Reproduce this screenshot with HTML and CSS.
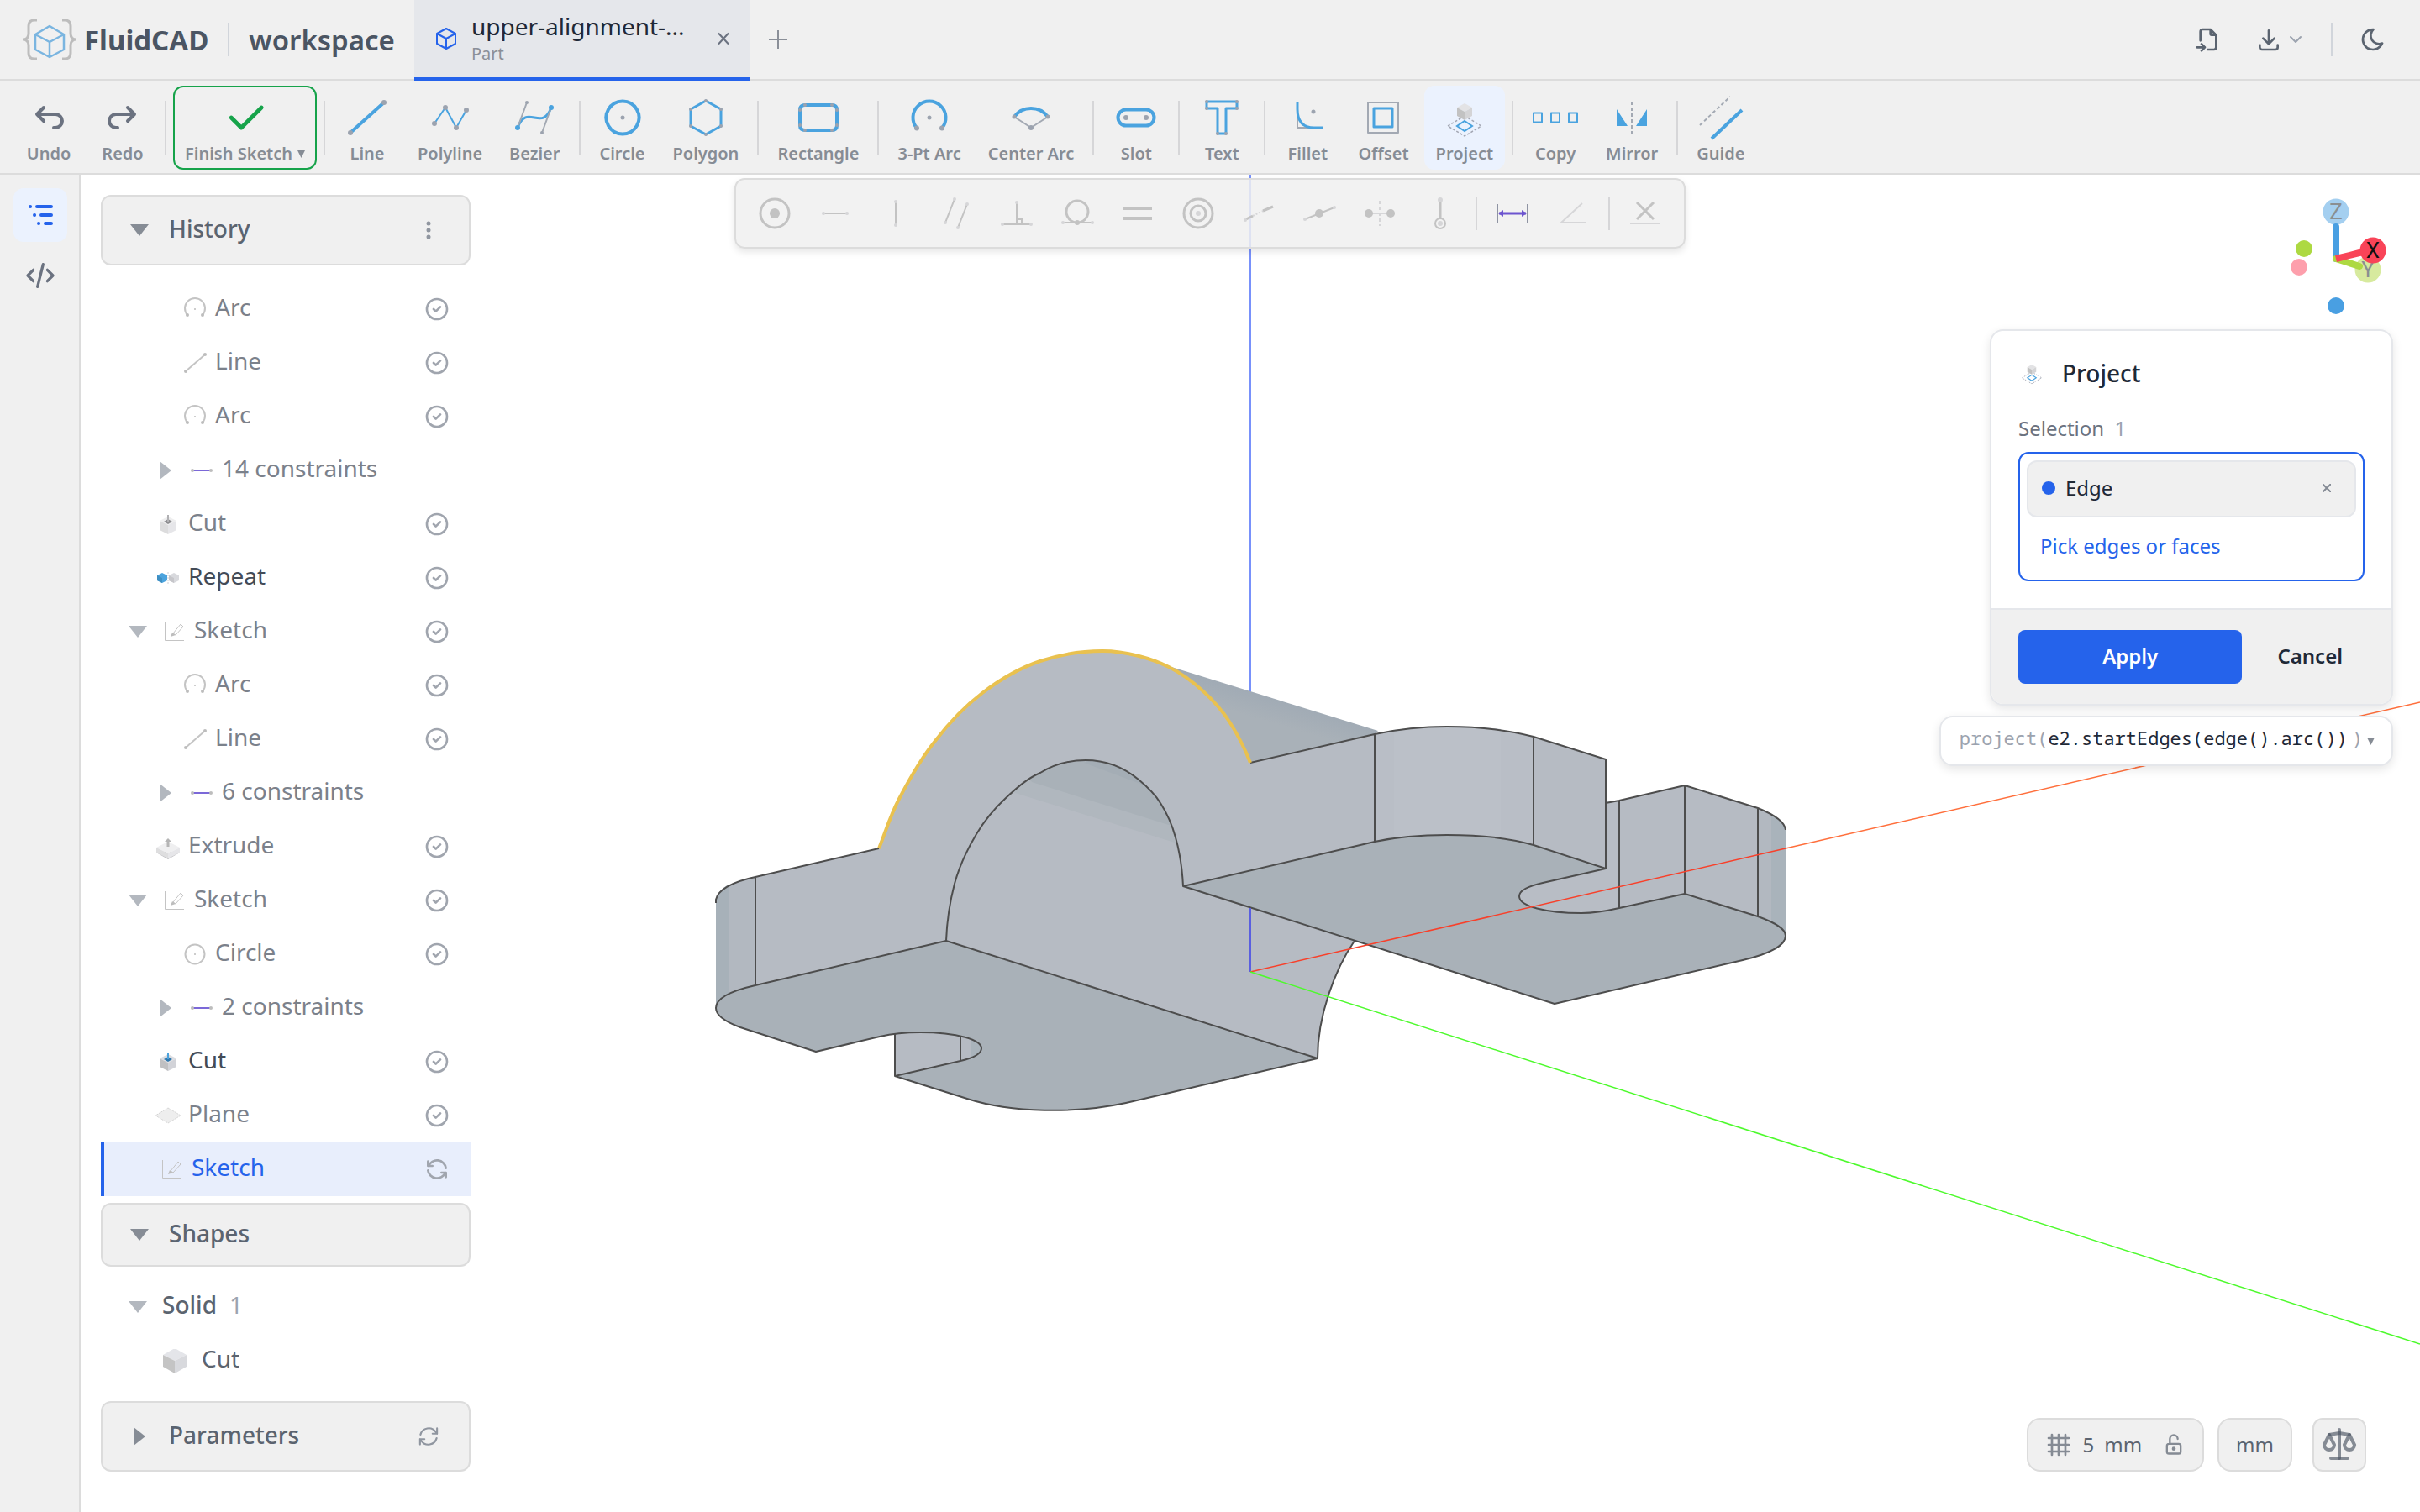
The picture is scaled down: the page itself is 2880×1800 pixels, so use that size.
FILE: index.html
```html
<!DOCTYPE html>
<html lang="en">

<head>
    <meta charset="UTF-8">
    <meta name="viewport" content="width=device-width, initial-scale=1.0">
    <title>FluidCAD</title>
    <link rel="stylesheet" href="styles.css">
</head>

<body>
    <!-- shared icons -->
    <svg class="defs" width="0" height="0" aria-hidden="true">
        <symbol id="i-check" viewBox="0 0 24 24">
            <path d="M3 12a9 9 0 1 0 18 0a9 9 0 1 0 -18 0M9 12l2 2l4 -4" />
        </symbol>
        <symbol id="i-arc" viewBox="0 0 28 28">
            <path d="M5 21A12 12 0 1 1 23 21" />
            <circle class="dot" cx="14" cy="14" r="1" />
            <circle class="dot" cx="5" cy="21" r="2" />
            <circle class="dot" cx="23" cy="21" r="2" />
        </symbol>
        <symbol id="i-circle" viewBox="0 0 28 28">
            <circle cx="14" cy="14" r="11.5" />
            <circle class="dot" cx="14" cy="14" r="1" />
        </symbol>
        <symbol id="i-line" viewBox="0 0 28 28">
            <path d="M3 24L26 4" />
            <circle class="dot" cx="3" cy="24" r="2" />
            <circle class="dot" cx="26" cy="4" r="2" />
        </symbol>
        <symbol id="i-constraint" viewBox="0 0 28 28">
            <path d="M3 14H25" />
            <circle class="dot" cx="3" cy="14" r="2" />
            <circle class="dot" cx="25" cy="14" r="2" />
        </symbol>
        <symbol id="i-sketch" viewBox="0 0 28 28">
            <path d="M3.500 3V24.500H26" stroke-width="1" />
            <path d="M13 16L22 5L25 8L16 18Z" stroke-width="1" />
            <path class="dot" d="M12 15L16 18L10 20Z" />
        </symbol>
        <symbol id="i-cube" viewBox="0 0 28 28">
            <path d="M14 -1L28 7L14 14L0 7Z" fill="#e4e5e9" stroke="none" />
            <path d="M0 7L14 14V29L0 21Z" fill="#c4c4c4" stroke="none" />
            <path d="M28 7L14 14V29L28 21Z" fill="#d8d9dd" stroke="none" />
        </symbol>
        <symbol id="i-project" viewBox="0 0 48 48">
            <path d="M24 22L44 34L24 46L4 34Z" fill="none" stroke="#a3a7b3" stroke-width="1.5" stroke-dasharray="3 2" />
            <path d="M24 28L33 34L24 40L15 34Z" fill="none" stroke="#4aa3df" stroke-width="2" />
            <path d="M24 7L33 12L24 17L15 12Z" fill="#e3e3e5" />
            <path d="M15 12L24 17V27L15 22Z" fill="#c2c2c2" />
            <path d="M33 12L24 17V27L33 22Z" fill="#d4d4d6" />
        </symbol>
    </svg>

    <header class="header">
        <div class="brand">
            <svg class="logo" viewBox="0 0 68 48" width="68" height="48">
                <path d="M20 1H17C12 1 10 4 10 8V17C10 21 8 24 3 24C8 24 10 27 10 31V40C10 44 12 47 17 47H20M50 1H53C58 1 60 4 60 8V17C60 21 62 24 67 24C62 24 60 27 60 31V40C60 44 58 47 53 47H50" fill="none" stroke="#bdbdbd" stroke-width="3" />
                <path d="M35 8L52 18V36L35 45L18 36V18ZM18 18L35 27L52 18M35 27V45" fill="none" stroke="#7ab5e0" stroke-width="2.5" stroke-linejoin="round" />
            </svg>
            <span>FluidCAD</span>
        </div>
        <span class="bar"></span>
        <span class="workspace-name">workspace</span>
        <div class="tab">
            <svg viewBox="0 0 24 26" width="24" height="26" fill="none" stroke="#2563eb" stroke-width="2" stroke-linejoin="round">
                <path d="M12 1L23 7V19L12 25L1 19V7ZM1 7L12 13L23 7M12 13V25" />
            </svg>
            <div class="tab-text">
                <span class="tab-title">upper-alignment-...</span>
                <span class="tab-kind">Part</span>
            </div>
            <button class="plain" aria-label="Close tab">
                <svg viewBox="0 0 16 16" width="16" height="16" fill="none" stroke="#6b7280" stroke-width="2"><path d="M2 1.500L14 14.500M14 1.500L2 14.500" /></svg>
            </button>
        </div>
        <button class="plain new-tab" aria-label="New tab">
            <svg viewBox="0 0 22 22" width="22" height="22" fill="none" stroke="#8a8f98" stroke-width="2"><path d="M11 0V22M0 11H22" /></svg>
        </button>
        <div class="header-actions">
            <button class="plain" aria-label="Import">
                <svg class="icon" viewBox="0 0 24 24" width="32" height="32"><path d="M14 3v4a1 1 0 0 0 1 1h4M5 13v-8a2 2 0 0 1 2 -2h7l5 5v11a2 2 0 0 1 -2 2h-5.500m-9.500 -2h7m-3 -3l3 3l-3 3" /></svg>
            </button>
            <button class="plain download" aria-label="Export">
                <svg class="icon" viewBox="0 0 24 24" width="32" height="32"><path d="M4 17v2a2 2 0 0 0 2 2h12a2 2 0 0 0 2 -2v-2M7 11l5 5l5 -5M12 4v12" /></svg>
                <svg class="icon faint" viewBox="0 0 24 24" width="24" height="24"><path d="M6 9l6 6l6 -6" /></svg>
            </button>
            <span class="bar"></span>
            <button class="plain" aria-label="Dark theme">
                <svg class="icon" viewBox="0 0 24 24" width="32" height="32"><path d="M12 3c.132 0 .263 0 .393 0a7.500 7.500 0 0 0 7.920 12.446a9 9 0 1 1 -8.313 -12.454z" /></svg>
            </button>
        </div>
    </header>

    <nav class="toolbar">
        <button class="tool">
            <svg class="hist" viewBox="0 0 24 24"><path d="M9 14l-4 -4l4 -4M5 10h11a4 4 0 1 1 0 8h-1" /></svg>Undo
        </button>
        <button class="tool">
            <svg class="hist" viewBox="0 0 24 24"><path d="M15 14l4 -4l-4 -4M19 10h-11a4 4 0 1 0 0 8h1" /></svg>Redo
        </button>
        <span class="sep"></span>
        <button class="tool finish">
            <svg viewBox="2 2 20 20"><path d="M5 12l5 5l10 -10" fill="none" stroke="#16a34a" stroke-width="2" stroke-linecap="round" /></svg>
            <span class="finish-label">Finish Sketch <svg class="caret" viewBox="0 0 9 9"><path d="M0 0H9L4.500 9Z" /></svg></span>
        </button>
        <span class="sep"></span>
        <button class="tool">
            <svg viewBox="0 0 48 48"><path d="M4 42L44 6" /><circle cx="4" cy="42" r="3" /><circle cx="44" cy="6" r="3" /></svg>Line
        </button>
        <button class="tool">
            <svg class="thin" viewBox="0 0 48 48"><path d="M5 31L18 12L31 36L43 15" /><circle cx="5" cy="31" r="3" /><circle cx="18" cy="12" r="3" /><circle cx="31" cy="36" r="3" /><circle cx="43" cy="15" r="3" /></svg>Polyline
        </button>
        <button class="tool">
            <svg class="medium" viewBox="0 0 48 48"><path d="M4 36C15 6 33 42 44 12" /><path class="aux" d="M4 36L15 6M44 12L33 42" /><circle cx="15" cy="6" r="2" /><circle cx="33" cy="42" r="2" /><circle class="blue" cx="4" cy="36" r="3" /><circle class="blue" cx="44" cy="12" r="3" /></svg>Bezier
        </button>
        <span class="sep"></span>
        <button class="tool">
            <svg viewBox="0 0 48 48"><path d="M24 4.500A19.500 19.500 0 1 1 23.900 4.500Z" /><circle cx="24" cy="24" r="2.500" /></svg>Circle
        </button>
        <button class="tool">
            <svg class="medium" viewBox="0 0 48 48"><path d="M24 4L42 14V34L24 44L6 34V14Z" /><circle cx="24" cy="4" r="2" /><circle cx="42" cy="14" r="2" /><circle cx="42" cy="34" r="2" /><circle cx="24" cy="44" r="2" /><circle cx="6" cy="34" r="2" /><circle cx="6" cy="14" r="2" /></svg>Polygon
        </button>
        <span class="sep"></span>
        <button class="tool">
            <svg viewBox="0 0 48 48"><path d="M8 9H40Q46 9 46 15V33Q46 39 40 39H8Q2 39 2 33V15Q2 9 8 9Z" /><circle cx="8" cy="9" r="2" /><circle cx="40" cy="9" r="2" /><circle cx="46" cy="15" r="2" /><circle cx="46" cy="33" r="2" /><circle cx="40" cy="39" r="2" /><circle cx="8" cy="39" r="2" /><circle cx="2" cy="33" r="2" /><circle cx="2" cy="15" r="2" /></svg>Rectangle
        </button>
        <span class="sep"></span>
        <button class="tool">
            <svg viewBox="0 0 48 48"><path d="M9 36.500A19.500 19.500 0 1 1 39 36.500" /><circle cx="24" cy="24" r="2.500" /><circle cx="9" cy="36.500" r="3" /><circle cx="39" cy="36.500" r="3" /></svg>3-Pt Arc
        </button>
        <button class="tool">
            <svg viewBox="0 0 48 48"><path class="aux" d="M4 23L24 36L44 23" /><path d="M4 23A25 25 0 0 1 44 23" /><circle cx="4" cy="23" r="2.500" /><circle cx="44" cy="23" r="2.500" /><circle cx="24" cy="36" r="3" /></svg>Center Arc
        </button>
        <span class="sep"></span>
        <button class="tool">
            <svg viewBox="0 0 48 48"><path d="M12 14.500H36A9.500 9.500 0 0 1 36 33.500H12A9.500 9.500 0 0 1 12 14.500Z" /><circle cx="12" cy="24" r="3" /><circle cx="36" cy="24" r="3" /></svg>Slot
        </button>
        <span class="sep"></span>
        <button class="tool">
            <svg class="medium" viewBox="0 0 48 48"><path d="M6 5H42V13H29V43H19V13H6Z" /><circle cx="6" cy="5" r="2" /><circle cx="42" cy="5" r="2" /><circle cx="6" cy="13" r="2" /><circle cx="42" cy="13" r="2" /><circle cx="19" cy="43" r="2" /><circle cx="29" cy="43" r="2" /></svg>Text
        </button>
        <span class="sep"></span>
        <button class="tool">
            <svg class="medium" viewBox="0 0 48 48"><path class="aux" d="M12 18V36H30" /><path d="M12 6V14C12 30 20 36 32 36H42" /><circle cx="31" cy="17" r="2.500" /></svg>Fillet
        </button>
        <button class="tool">
            <svg class="medium" viewBox="0 0 48 48"><path class="aux" d="M6 6H42V42H6Z" /><path d="M13 13H35V35H13Z" /></svg>Offset
        </button>
        <button class="tool active">
            <svg><use href="#i-project" /></svg>Project
        </button>
        <span class="sep"></span>
        <button class="tool">
            <svg class="thin" viewBox="0 0 48 48"><path d="M-2 18.500H8V29.500H-2ZM19 18.500H29V29.500H19ZM40 18.500H50V29.500H40Z" /></svg>Copy
        </button>
        <button class="tool">
            <svg viewBox="0 0 48 48"><path class="aux" d="M24 5V44" stroke-dasharray="4 3" /><path class="solid" d="M6 14L19 34H6ZM42 14L29 34H42Z" /></svg>Mirror
        </button>
        <span class="sep"></span>
        <button class="tool">
            <svg viewBox="0 0 48 48"><path class="aux" d="M-1 33L35 -1" stroke-dasharray="4 3" /><path d="M13 49L49 15" /></svg>Guide
        </button>
    </nav>

    <main class="main">
        <aside class="rail">
            <button class="rail-btn active" aria-label="Model tree">
                <svg viewBox="0 0 32 32" width="32" height="32"><path d="M12 6H29M17 16H29M22 26H29M4 6H4.100M9 16H9.100M14 26H14.100" /></svg>
            </button>
            <button class="rail-btn" aria-label="Code">
                <svg viewBox="0 0 24 24" width="40" height="40"><path d="M7 8l-4 4l4 4M17 8l4 4l-4 4M14 4l-4 16" /></svg>
            </button>
        </aside>

        <section class="stage">
            <svg class="scene" viewBox="96 208 2784 1592" preserveAspectRatio="xMidYMid slice">
                <defs>
                    <linearGradient id="barrel" gradientUnits="userSpaceOnUse" x1="1560" y1="845" x2="1552" y2="872">
                        <stop offset="0" stop-color="#a1abb5" />
                        <stop offset="1" stop-color="#a9b1b8" />
                    </linearGradient>
                    <clipPath id="archClip">
                        <path d="M1126 1120C1127 1095 1130 1075 1136 1052C1142 1030 1150 1013 1162 993C1172 976 1183 963 1197 950C1210 938 1222 927 1238 920C1256 909 1274 905 1292 905C1318 905 1338 914 1355 928C1367 938 1375 946 1381 956C1390 970 1395 982 1399 997C1405 1018 1407 1035 1408 1055Z" />
                    </clipPath>
                </defs>

                <path d="M1488 208V830" stroke="#7891fb" stroke-width="2" />

                <!-- far block behind the right slot -->
                <path d="M1808 1067L1911 955L1927 953L2005 935L2092 962C2112 970 2124 978 2125 988V1114L2092 1130L1880 1100Z" fill="#b6bbc3" />
                <path d="M1808 1050L1911 1030V955L1927 953V1095H1808Z" fill="#b8bdc5" />
                <path d="M2092 962C2112 970 2124 978 2125 988V1114L2092 1094Z" fill="#b2b8c0" />
                <path d="M2108 969C2119 975 2124 980 2125 988V1116L2108 1110Z" fill="#a9b3bb" />

                <!-- bore wall -->
                <path d="M1126 1120L1150 900L1400 900L1408 1055L1612 1120C1590 1155 1568 1210 1568 1260Z" fill="#b6bbc3" />

                <!-- front face -->
                <path d="M1046 1010C1054 990 1059 972 1070 951C1081 930 1096 903 1113 882C1129 861 1148 841 1169 825C1190 809 1214 795 1238 787C1262 779 1288 775 1312 775C1340 775 1371 784 1391 794C1405 801 1420 812 1432 823C1444 834 1454 845 1463 859C1472 873 1481 890 1488 908L1636 874V1002L1408 1055C1407 1035 1405 1018 1399 997C1395 982 1390 970 1381 956C1375 946 1367 938 1355 928C1338 914 1318 905 1292 905C1274 905 1256 909 1238 920C1222 927 1210 938 1197 950C1183 963 1172 976 1162 993C1150 1013 1142 1030 1136 1052C1130 1075 1127 1095 1126 1120L899 1173L852 1200V1071C854 1060 870 1050 899 1044Z" fill="#b6bbc3" />
                <path d="M899 1044C870 1050 854 1060 852 1071V1200L899 1173Z" fill="#b2b8c0" />
                <path d="M867 1053C858 1058 853 1064 852 1071V1200L867 1184Z" fill="#a7b1b9" />
                <g clip-path="url(#archClip)">
                    <path d="M1205 943L1401 1004L1420 880H1190Z" fill="#b0b7be" />
                    <path d="M1228 931L1394 983L1420 880H1190Z" fill="#a9b1b8" />
                    <path d="M1290 908L1365 936L1340 890Z" fill="#a4adb5" />
                </g>

                <!-- barrel top -->
                <path d="M1391 793L1640 870L1636 874L1488 908C1481 890 1472 873 1463 859C1454 845 1444 834 1432 823C1420 812 1405 801 1391 793Z" fill="url(#barrel)" />

                <!-- right lobe walls -->
                <path d="M1825 877L1911 904V1034L1825 1006Z" fill="#b6bbc3" />
                <path d="M1636 874C1664 868 1690 865 1722 865C1764 865 1798 870 1825 877V1006C1798 998 1764 994 1722 994C1690 994 1664 997 1636 1002Z" fill="#b9bec6" />
                <path d="M1659 869Q1722 860 1786 868V998Q1722 989 1659 998Z" fill="#bbc0c8" />

                <!-- undersides -->
                <path d="M1408 1055L1636 1002C1664 996 1690 994 1722 994C1764 994 1798 998 1825 1006L1911 1034L1836 1051C1818 1055 1808 1060 1808 1067C1808 1079 1840 1087 1882 1087C1900 1087 1914 1084 1927 1081L2005 1064L2092 1091C2114 1099 2125 1106 2125 1114C2125 1126 2104 1136 2074 1143L1850 1195Z" fill="#a9b1b8" />
                <path d="M1065 1229H1095C1140 1229 1168 1238 1168 1248C1168 1254 1160 1259 1143 1263L1065 1281Z" fill="#b6bbc3" />
                <path d="M1155 1238C1164 1241 1168 1244 1168 1248C1168 1254 1162 1257 1155 1260Z" fill="#a9b3bb" />
                <path d="M1126 1120L1568 1260L1340 1313C1280 1326 1204 1325 1151 1308L1065 1281L1143 1263C1160 1259 1168 1254 1168 1248C1168 1238 1140 1229 1095 1229C1076 1229 1060 1231 1047 1234L971 1252L881 1223C862 1216 852 1208 852 1200C852 1189 868 1180 899 1173Z" fill="#a9b1b8" />

                <!-- edges -->
                <g class="edges">
                    <path d="M1046 1010L899 1044C870 1050 854 1060 852 1071V1075M899 1044V1173" />
                    <path d="M1126 1120L1568 1260L1340 1313C1280 1326 1204 1325 1151 1308L1065 1281L1143 1263C1160 1259 1168 1254 1168 1248C1168 1238 1140 1229 1095 1229C1076 1229 1060 1231 1047 1234L971 1252L881 1223C862 1216 852 1208 852 1200C852 1189 868 1180 899 1173Z" />
                    <path d="M1065 1230V1281M1143 1234V1263" />
                    <path d="M1126 1120C1127 1095 1130 1075 1136 1052C1142 1030 1150 1013 1162 993C1172 976 1183 963 1197 950C1210 938 1222 927 1238 920C1256 909 1274 905 1292 905C1318 905 1338 914 1355 928C1367 938 1375 946 1381 956C1390 970 1395 982 1399 997C1405 1018 1407 1035 1408 1055" />
                    <path d="M1568 1260C1568 1210 1588 1155 1612 1120" />
                    <path d="M1488 908L1636 874C1664 868 1690 865 1722 865C1764 865 1798 870 1825 877L1911 904V1034M1636 874V1002M1825 877V1006" />
                    <path d="M1408 1055L1636 1002C1664 996 1690 994 1722 994C1764 994 1798 998 1825 1006L1911 1034L1836 1051C1818 1055 1808 1060 1808 1067C1808 1079 1840 1087 1882 1087C1900 1087 1914 1084 1927 1081L2005 1064L2092 1091C2114 1099 2125 1106 2125 1114C2125 1126 2104 1136 2074 1143L1850 1195Z" />
                    <path d="M1911 956L1927 953L2005 935L2092 962C2112 970 2124 978 2125 988M1927 953V1081M2005 935V1064M2092 962V1091" />
                </g>
                <path d="M1046 1010C1054 990 1059 972 1070 951C1081 930 1096 903 1113 882C1129 861 1148 841 1169 825C1190 809 1214 795 1238 787C1262 779 1288 775 1312 775C1340 775 1371 784 1391 794C1405 801 1420 812 1432 823C1444 834 1454 845 1463 859C1472 873 1481 890 1488 908" fill="none" stroke="#e9c14f" stroke-width="4" />

                <!-- axes -->
                <path d="M1488 1081V1157" stroke="#5a5fe0" stroke-width="2" />
                <path d="M1488 1157L2125 1010" stroke="#f8402a" stroke-width="1.500" />
                <path d="M2125 1010L2880 836" stroke="#ff6f3c" stroke-width="1.500" />
                <path d="M1488 1157L2880 1600" stroke="#4dfa2c" stroke-width="1.500" />
            </svg>

            <div class="constraints">
                <button aria-label="Coincident"><svg viewBox="0 0 48 48"><circle cx="24" cy="24" r="17" stroke-width="3" /><circle class="fill" cx="24" cy="24" r="6" /></svg></button>
                <button aria-label="Horizontal"><svg viewBox="0 0 48 48"><path d="M10 24H38" /><circle class="end" cx="10" cy="24" r="2" /><circle class="end" cx="38" cy="24" r="2" /></svg></button>
                <button aria-label="Vertical"><svg viewBox="0 0 48 48"><path d="M24 10V38" /><circle class="end" cx="24" cy="10" r="2" /><circle class="end" cx="24" cy="38" r="2" /></svg></button>
                <button aria-label="Parallel"><svg viewBox="0 0 48 48"><path d="M22 7L11 35M37 13L26 41" /><circle class="end" cx="22" cy="7" r="2" /><circle class="end" cx="11" cy="35" r="2" /><circle class="end" cx="37" cy="13" r="2" /><circle class="end" cx="26" cy="41" r="2" /></svg></button>
                <button aria-label="Perpendicular"><svg viewBox="0 0 48 48"><path d="M24 11V37M7 37H41M24 31H30V37" /><circle class="end" cx="24" cy="11" r="2" /><circle class="end" cx="7" cy="37" r="2" /><circle class="end" cx="41" cy="37" r="2" /></svg></button>
                <button aria-label="Tangent"><svg viewBox="0 0 48 48"><circle cx="24" cy="22" r="13" stroke-width="3" /><path d="M7 35H42" /><circle class="fill" cx="24" cy="35" r="3" /><circle class="end" cx="7" cy="35" r="2" /><circle class="end" cx="42" cy="35" r="2" /></svg></button>
                <button aria-label="Equal"><svg viewBox="0 0 48 48"><path d="M7 18H41M7 30H41" stroke-width="4" /></svg></button>
                <button aria-label="Concentric"><svg viewBox="0 0 48 48"><circle cx="24" cy="24" r="17" stroke-width="3" /><circle cx="24" cy="24" r="9" stroke-width="3" /><circle class="end" cx="24" cy="24" r="3" /></svg></button>
                <button aria-label="Collinear"><svg viewBox="0 0 48 48"><path d="M9 31L17 27M29 21L41 16" stroke-width="3" /><path class="light" d="M17 27L29 21" stroke-dasharray="2 2" /><circle class="end" cx="8" cy="32" r="2" /></svg></button>
                <button aria-label="Midpoint"><svg viewBox="0 0 48 48"><path d="M7 31L42 17" /><circle class="fill" cx="24" cy="24" r="5" /><circle class="end" cx="7" cy="31" r="2" /><circle class="end" cx="42" cy="17" r="2" /></svg></button>
                <button aria-label="Symmetric"><svg viewBox="0 0 48 48"><path class="light" d="M24 9V39" stroke-dasharray="4 3" /><path class="light" d="M10 24H38" /><circle class="fill" cx="11" cy="24" r="5" /><circle class="fill" cx="37" cy="24" r="5" /></svg></button>
                <button aria-label="Fix"><svg viewBox="0 0 48 48"><path d="M24 8V30" stroke-width="3" /><circle cx="24" cy="36" r="6" /><circle class="end" cx="24" cy="36" r="3" /><circle class="end" cx="24" cy="8" r="3" /></svg></button>
                <span class="sep"></span>
                <button aria-label="Dimension"><svg viewBox="0 0 48 48"><path d="M6 13V36M42 13V36" stroke="#8f94a3" /><path d="M8 24H40" stroke="#6d55cf" stroke-width="3" /><path d="M7 24L13 20V28ZM41 24L35 20V28Z" fill="#6d55cf" stroke="none" /></svg></button>
                <button aria-label="Angle"><svg viewBox="0 0 48 48"><path class="light" d="M35 12L10 35H39" /></svg></button>
                <span class="sep"></span>
                <button aria-label="Delete constraints"><svg viewBox="0 0 48 48"><path d="M14 11L34 31M34 11L14 31" stroke-width="3" /><path class="light" d="M6 36H42" /></svg></button>
            </div>

            <div class="tree">
                <div class="group-head tall">
                    <button class="plain toggle" aria-label="Collapse history"><span class="tri down dark"></span></button>
                    <h2>History</h2>
                    <button class="plain" aria-label="History menu">
                        <svg viewBox="0 0 32 32" width="32" height="32" fill="#9096a0"><circle cx="16" cy="8" r="2.500" /><circle cx="16" cy="16" r="2.500" /><circle cx="16" cy="24" r="2.500" /></svg>
                    </button>
                </div>
                <ul class="history">
                    <li class="row leaf"><svg class="ico"><use href="#i-arc" /></svg><span>Arc</span><svg class="state"><use href="#i-check" /></svg></li>
                    <li class="row leaf"><svg class="ico"><use href="#i-line" /></svg><span>Line</span><svg class="state"><use href="#i-check" /></svg></li>
                    <li class="row leaf"><svg class="ico"><use href="#i-arc" /></svg><span>Arc</span><svg class="state"><use href="#i-check" /></svg></li>
                    <li class="row feature"><button class="plain toggle" aria-label="Expand"><span class="tri right"></span></button><svg class="ico purple"><use href="#i-constraint" /></svg><span>14 constraints</span></li>
                    <li class="row feature">
                        <svg class="ico" viewBox="0 0 28 28"><path d="M14 5L24 10L14 15L4 10Z" fill="#eeeeef" stroke="none" /><path d="M4 10L14 15V26L4 21Z" fill="#dcdcdd" stroke="none" /><path d="M24 10L14 15V26L24 21Z" fill="#e6e6e9" stroke="none" /><path d="M14 8L19 11L14 14L9 11Z" fill="#8d8d90" stroke="none" /><path d="M14 3V11" stroke="#b0b0b3" /></svg>
                        <span>Cut</span><svg class="state"><use href="#i-check" /></svg>
                    </li>
                    <li class="row feature strong">
                        <svg class="ico" viewBox="0 0 28 28"><path d="M7 8L13 11V17L7 20L1 17V11Z" fill="#4ba3dd" stroke="none" /><path d="M1 11L7 14V20L1 17Z" fill="#3f8fc2" stroke="none" /><path d="M14 7V21" stroke="#d0d0d3" stroke-width="1" stroke-dasharray="2 1" /><path d="M21 8L27 11V17L21 20L15 17V11Z" fill="#d8d9dd" stroke="none" /><path d="M15 11L21 14V20L15 17Z" fill="#c6c6ca" stroke="none" /></svg>
                        <span>Repeat</span><svg class="state"><use href="#i-check" /></svg>
                    </li>
                    <li class="row parent"><button class="plain toggle" aria-label="Collapse"><span class="tri down"></span></button><svg class="ico"><use href="#i-sketch" /></svg><span>Sketch</span><svg class="state"><use href="#i-check" /></svg></li>
                    <li class="row leaf"><svg class="ico"><use href="#i-arc" /></svg><span>Arc</span><svg class="state"><use href="#i-check" /></svg></li>
                    <li class="row leaf"><svg class="ico"><use href="#i-line" /></svg><span>Line</span><svg class="state"><use href="#i-check" /></svg></li>
                    <li class="row feature"><button class="plain toggle" aria-label="Expand"><span class="tri right"></span></button><svg class="ico purple"><use href="#i-constraint" /></svg><span>6 constraints</span></li>
                    <li class="row feature">
                        <svg class="ico" viewBox="0 0 28 28"><path d="M0 21L14 29L28 21V20H0Z" fill="#bcbcbf" stroke="none" /><path d="M14 8L28 15L14 22L0 15Z" fill="#efeff0" stroke="none" /><path d="M0 15L14 22V28L0 21Z" fill="#dededf" stroke="none" /><path d="M28 15L14 22V28L28 21Z" fill="#e6e6e9" stroke="none" /><path d="M14 14V6" stroke="#b5b5b5" stroke-width="3" /><path d="M10 8L14 4L18 8Z" fill="#b5b5b5" stroke="none" /></svg>
                        <span>Extrude</span><svg class="state"><use href="#i-check" /></svg>
                    </li>
                    <li class="row parent"><button class="plain toggle" aria-label="Collapse"><span class="tri down"></span></button><svg class="ico"><use href="#i-sketch" /></svg><span>Sketch</span><svg class="state"><use href="#i-check" /></svg></li>
                    <li class="row leaf"><svg class="ico"><use href="#i-circle" /></svg><span>Circle</span><svg class="state"><use href="#i-check" /></svg></li>
                    <li class="row feature"><button class="plain toggle" aria-label="Expand"><span class="tri right"></span></button><svg class="ico purple"><use href="#i-constraint" /></svg><span>2 constraints</span></li>
                    <li class="row feature strong">
                        <svg class="ico" viewBox="0 0 28 28"><path d="M14 5L24 10L14 15L4 10Z" fill="#dcdde1" stroke="none" /><path d="M4 10L14 15V25L4 20Z" fill="#c0c0c2" stroke="none" /><path d="M24 10L14 15V25L24 20Z" fill="#d2d3d8" stroke="none" /><path d="M14 8L19 11L14 14L9 11Z" fill="#2f78ae" stroke="none" /><path d="M14 3V11" stroke="#4ba3dd" /></svg>
                        <span>Cut</span><svg class="state"><use href="#i-check" /></svg>
                    </li>
                    <li class="row feature">
                        <svg class="ico" viewBox="0 0 28 28"><path d="M14 5L29 14L14 23L-1 14Z" fill="#eeeeee" stroke="#d4d4d4" stroke-width="1" stroke-dasharray="2 1" /></svg>
                        <span>Plane</span><svg class="state"><use href="#i-check" /></svg>
                    </li>
                    <li class="row feature selected">
                        <svg class="ico"><use href="#i-sketch" /></svg><span>Sketch</span>
                        <svg class="state" viewBox="0 0 24 24"><path d="M20 11a8.100 8.100 0 0 0 -15.500 -2m-.5 -4v4h4M4 13a8.100 8.100 0 0 0 15.500 2m.5 4v-4h-4" /></svg>
                    </li>
                </ul>

                <div class="group-head">
                    <button class="plain toggle" aria-label="Collapse shapes"><span class="tri down dark"></span></button>
                    <h2>Shapes</h2>
                </div>
                <ul class="shapes">
                    <li class="row parent"><button class="plain toggle" aria-label="Collapse"><span class="tri down"></span></button><b>Solid</b><span class="count">1</span></li>
                    <li class="row shape"><svg class="ico"><use href="#i-cube" /></svg><span>Cut</span></li>
                </ul>

                <div class="group-head tall">
                    <button class="plain toggle" aria-label="Expand parameters"><span class="tri right dark"></span></button>
                    <h2>Parameters</h2>
                    <button class="plain" aria-label="Refresh parameters">
                        <svg viewBox="-3 -3 30 30" width="32" height="32" fill="none" stroke="#9096a0" stroke-width="2" stroke-linecap="round" stroke-linejoin="round"><path d="M3 10a9.500 9.500 0 0 1 17 -3l1.500 2v-6M21.500 9h-5M21 14a9.500 9.500 0 0 1 -17 3l-1.500 -2v6M2.500 15h5" /></svg>
                    </button>
                </div>
            </div>

            <div class="side">
                <svg class="gizmo" viewBox="0 -8 140 160" width="140" height="160">
                    <circle cx="34" cy="56" r="10" fill="#add942" />
                    <circle cx="28" cy="78" r="10" fill="#fd9fac" />
                    <circle cx="72" cy="124" r="10" fill="#499fe2" />
                    <circle cx="72" cy="12" r="15.500" fill="#a4cff0" />
                    <path d="M72 30V68" stroke="#499fe2" stroke-width="8" stroke-linecap="round" />
                    <circle cx="110" cy="81" r="15.500" fill="#d7ea9e" />
                    <path d="M72 68L100 77" stroke="#add942" stroke-width="8" stroke-linecap="round" />
                    <path d="M72 68L104 60" stroke="#f94458" stroke-width="8" />
                    <text class="dim" x="72" y="21">Z</text>
                    <text class="dim" x="110" y="90">Y</text>
                    <circle cx="116" cy="58" r="15.500" fill="#f94458" />
                    <text x="116" y="67">X</text>
                </svg>

                <form class="dialog">
                    <div class="dialog-body">
                        <h3><svg width="28" height="28"><use href="#i-project" /></svg>Project</h3>
                        <div class="field-label">Selection <span>1</span></div>
                        <div class="picker">
                            <div class="chip"><i></i>Edge
                                <button class="plain" type="button" aria-label="Remove edge">
                                    <svg viewBox="0 0 10 10" width="10" height="10" fill="none" stroke="#858b95" stroke-width="2"><path d="M0 0L10 10M10 0L0 10" /></svg>
                                </button>
                            </div>
                            <p>Pick edges or faces</p>
                        </div>
                    </div>
                    <div class="dialog-foot">
                        <button class="apply" type="button">Apply</button>
                        <button class="cancel" type="button">Cancel</button>
                    </div>
                </form>

                <button class="snippet"><code><span>project(</span>e2.startEdges(edge().arc())</code><code><span>)</span></code><svg class="caret" viewBox="0 0 9 9"><path d="M0 0H9L4.500 9Z" /></svg></button>

                <div class="status">
                    <button class="status-btn">
                        <svg class="icon" viewBox="0 0 24 24" width="32" height="32"><path d="M3 6h18M3 12h18M3 18h18M6 3v18M12 3v18M18 3v18" /></svg>
                        <span>5</span><span class="unit">mm</span>
                        <svg class="icon" viewBox="0 0 24 24" width="28" height="28"><path d="M5 13a2 2 0 0 1 2 -2h10a2 2 0 0 1 2 2v6a2 2 0 0 1 -2 2h-10a2 2 0 0 1 -2 -2zM11 16a1 1 0 1 0 2 0a1 1 0 0 0 -2 0M8 11v-5a4 4 0 0 1 8 0" /></svg>
                    </button>
                    <button class="status-btn">mm</button>
                    <button class="status-btn square" aria-label="Mass properties">
                        <svg class="icon" viewBox="0 0 24 24" width="48" height="48"><path d="M7 20h10" /><path d="M6 6l6 -1l6 1" /><path d="M12 3v17" /><path d="M9 12l-3 -6l-3 6a3 3 0 0 0 6 0" /><path d="M21 12l-3 -6l-3 6a3 3 0 0 0 6 0" /></svg>
                    </button>
                </div>
            </div>
        </section>
    </main>
</body>

</html>
```
FILE: styles.css
```css
* {
    box-sizing: border-box;
}

body {
    margin: 0;
    height: 100vh;
    display: flex;
    flex-direction: column;
    font-family: "Noto Sans", sans-serif;
    font-size: 28px;
    color: #4b5563;
    background-color: white;
    overflow: hidden;
}

button {
    font-family: inherit;
    color: inherit;
    cursor: pointer;
}

.defs {
    position: absolute;
}

.plain {
    display: flex;
    align-items: center;
    justify-content: center;
    padding: 0;
    border: none;
    background: none;
}

.icon {
    fill: none;
    stroke: #5b6470;
    stroke-width: 2;
    stroke-linecap: round;
    stroke-linejoin: round;
}

.icon.faint {
    stroke: #9ca3af;
}

/* header */

.header {
    display: flex;
    align-items: center;
    height: 96px;
    flex-shrink: 0;
    padding-left: 24px;
    padding-right: 40px;
    background-color: #f0f0f0;
    border-bottom: 2px solid #dcdcdc;
    font-size: 33px;
    font-weight: 600;
}

.brand {
    display: flex;
    align-items: center;
    gap: 8px;
    font-weight: 700;
}

.bar {
    width: 2px;
    height: 40px;
    margin: 0 23px;
    background-color: #d1d5db;
}

.tab {
    display: flex;
    align-items: center;
    width: 400px;
    height: 96px;
    margin-left: 23px;
    margin-bottom: -2px;
    padding: 0 24px 0 26px;
    border-bottom: 4px solid #2563eb;
    background-color: #e5e7eb;
}

.tab-text {
    flex: 1;
    display: flex;
    flex-direction: column;
    margin-left: 18px;
    font-weight: 400;
}

.tab-title {
    font-size: 28px;
    line-height: 36px;
    color: #1f2937;
}

.tab-kind {
    font-size: 20px;
    line-height: 30px;
    color: #8a8f98;
}

.new-tab {
    margin-left: 22px;
}

.header-actions {
    display: flex;
    align-items: center;
    margin-left: auto;
}

.header-actions .download {
    margin-left: 40px;
    gap: 4px;
}

.header-actions .bar {
    margin: 0 32px 0 30px;
}

/* toolbar */

.toolbar {
    display: flex;
    align-items: center;
    gap: 4px;
    height: 112px;
    flex-shrink: 0;
    padding: 2px 16px 0;
    background-color: #f0f0f0;
    border-bottom: 2px solid #dcdcdc;
}

.tool {
    display: flex;
    flex-direction: column;
    align-items: center;
    min-width: 84px;
    height: 100px;
    padding: 14px 14px 0;
    border: none;
    border-radius: 12px;
    background: none;
    font-size: 20px;
    font-weight: 600;
    line-height: 38px;
    color: #868c95;
    white-space: nowrap;
}

.tool svg {
    width: 48px;
    height: 48px;
    flex-shrink: 0;
    overflow: visible;
}

.tool.active {
    background-color: #ebf2fe;
}

.tool path {
    fill: none;
    stroke: #4aa3df;
    stroke-width: 4;
    stroke-linejoin: round;
}

.tool circle {
    fill: #9ca3af;
}

.tool .blue {
    fill: #4aa3df;
}

.tool .medium path {
    stroke-width: 3;
}

.tool .thin path,
.tool path.aux {
    stroke-width: 2;
}

.tool .aux {
    stroke: #a3a9b3;
}

.tool .solid {
    fill: #4aa3df;
    stroke: none;
}

.tool .hist path {
    stroke: #6b7280;
    stroke-width: 2;
    stroke-linecap: round;
}

.tool.finish {
    padding: 12px 12px 0;
    border: 2px solid #16a34a;
}

.tool.finish path {
    stroke: #16a34a;
    stroke-width: 2;
}

.finish-label {
    display: flex;
    align-items: center;
    gap: 6px;
}

.tool svg.caret {
    width: 9px;
    height: 9px;
}

.tool.finish .caret path {
    fill: #868c95;
    stroke: none;
}

.sep {
    width: 2px;
    height: 64px;
    margin: 0 4px;
    background-color: #d6d6d8;
}

/* main area */

.main {
    flex: 1;
    display: flex;
    min-height: 0;
}

.rail {
    display: flex;
    flex-direction: column;
    align-items: center;
    gap: 8px;
    width: 96px;
    padding: 16px 0 0 2px;
    background-color: #f0f0f0;
    border-right: 2px solid #dcdcdc;
}

.rail-btn {
    display: flex;
    align-items: center;
    justify-content: center;
    width: 64px;
    height: 64px;
    padding: 0;
    border: none;
    border-radius: 12px;
    background: none;
}

.rail-btn svg {
    fill: none;
    stroke: #6b7280;
    stroke-width: 2;
    stroke-linecap: round;
    stroke-linejoin: round;
}

.rail-btn.active {
    background-color: #ebf2fe;
}

.rail-btn.active svg {
    stroke: #2563eb;
    stroke-width: 4;
}

.stage {
    position: relative;
    flex: 1;
    display: flex;
    justify-content: space-between;
    align-items: stretch;
    padding: 24px 32px 48px 24px;
}

.scene {
    position: absolute;
    inset: 0;
    width: 100%;
    height: 100%;
}

.edges {
    fill: none;
    stroke: #4d4d4d;
    stroke-width: 2;
    stroke-linejoin: round;
}

/* floats over the scene, centred on the window */
.constraints {
    position: absolute;
    top: 4px;
    left: calc(50% - 48px);
    transform: translateX(-50%);
    display: flex;
    align-items: center;
    gap: 8px;
    height: 84px;
    padding: 0 14px;
    border: 2px solid #dcdcdc;
    border-radius: 12px;
    background-color: rgba(240, 240, 240, 0.85);
    box-shadow: 0 4px 8px rgba(0, 0, 0, 0.1);
}

.constraints button {
    display: flex;
    align-items: center;
    justify-content: center;
    width: 64px;
    height: 64px;
    padding: 0;
    border: none;
    background: none;
}

.constraints svg {
    width: 48px;
    height: 48px;
    fill: none;
    stroke: #c3c3c3;
    stroke-width: 2;
}

.constraints .fill {
    fill: #c3c3c3;
    stroke: none;
}

.constraints .end {
    fill: #d6d6d8;
    stroke: none;
}

.constraints .light {
    stroke: #d6d6d8;
}

.constraints .sep {
    height: 40px;
    margin: 0 2px;
}

/* model tree */

.tree {
    position: relative;
    display: flex;
    flex-direction: column;
    width: 440px;
}

.group-head {
    display: flex;
    align-items: center;
    height: 76px;
    padding: 0 32px 0 33px;
    border: 2px solid #dcdcdc;
    border-radius: 12px;
    background-color: #f0f0f0;
}

.group-head.tall {
    height: 84px;
}

.group-head h2 {
    flex: 1;
    margin: 0 0 0 24px;
    padding-bottom: 5px;
    font-size: 28px;
    font-weight: 500;
    color: #5b6470;
}

.toggle {
    width: 22px;
    height: 22px;
}

.tri {
    background-color: #b3b8bf;
}

.tri.down {
    width: 22px;
    height: 14px;
    clip-path: polygon(0 0, 100% 0, 50% 100%);
}

.tri.right {
    width: 14px;
    height: 22px;
    clip-path: polygon(0 0, 100% 50%, 0 100%);
}

.tri.dark {
    background-color: #868c95;
}

.history,
.shapes {
    margin: 0;
    padding: 0;
    list-style: none;
}

.history {
    padding: 20px 0 8px;
}

.shapes {
    padding: 16px 0;
}

.row {
    display: flex;
    align-items: center;
    gap: 10px;
    height: 64px;
    padding-right: 24px;
    color: #7b818b;
}

.row span,
.row b {
    padding-bottom: 6px;
}

.row .tri {
    padding: 0;
}

.row.leaf {
    padding-left: 98px;
}

.row.feature {
    padding-left: 66px;
}

.row.parent {
    padding-left: 33px;
}

.row.shape {
    gap: 18px;
    padding-left: 74px;
    color: #5b6470;
}

.row.strong {
    color: #434b57;
}

.row.selected {
    border-left: 4px solid #2563eb;
    background-color: #e8eefc;
    color: #2563eb;
}

.row .toggle {
    margin-right: 8px;
}

.row b {
    font-weight: 500;
    color: #5b6470;
}

.row .count {
    margin-left: 5px;
    color: #9ca3af;
}

.ico {
    width: 28px;
    height: 28px;
    flex-shrink: 0;
    overflow: visible;
    fill: none;
    stroke: #c4c4c4;
    stroke-width: 2;
}

.ico.purple {
    stroke: #7b68d8;
}

.dot {
    fill: #bdbdbd;
    stroke: none;
}

.state {
    width: 32px;
    height: 32px;
    margin-left: auto;
    fill: none;
    stroke: #a0a5ae;
    stroke-width: 2;
    stroke-linecap: round;
    stroke-linejoin: round;
}

/* right side */

.side {
    position: relative;
    display: flex;
    flex-direction: column;
    align-items: flex-end;
}

.gizmo text {
    font-family: Roboto, sans-serif;
    font-size: 26px;
    text-anchor: middle;
    fill: #111;
}

.gizmo .dim {
    fill: #8a8f92;
}

.dialog {
    width: 480px;
    margin-bottom: 12px;
    border: 2px solid #e5e7eb;
    border-radius: 16px;
    background-color: white;
    box-shadow: 0 4px 12px rgba(0, 0, 0, 0.1);
    font-size: 24px;
    line-height: 32px;
    overflow: hidden;
}

.dialog-body {
    padding: 30px 32px 32px;
}

.dialog h3 {
    display: flex;
    align-items: center;
    gap: 22px;
    margin: 0 0 30px;
    font-size: 28px;
    font-weight: 500;
    line-height: 40px;
    color: #1f2937;
}

.dialog h3 svg {
    margin-left: 2px;
}

.field-label {
    margin-bottom: 12px;
    color: #6b7280;
}

.field-label span {
    margin-left: 6px;
    color: #9ca3af;
}

.picker {
    padding: 8px;
    border: 2px solid #2563eb;
    border-radius: 12px;
}

.chip {
    display: flex;
    align-items: center;
    gap: 12px;
    height: 68px;
    padding: 0 28px 2px 16px;
    border: 2px solid #e5e7eb;
    border-radius: 12px;
    background-color: #f0f0f0;
    color: #1f2937;
}

.chip i {
    width: 16px;
    height: 16px;
    border-radius: 50%;
    background-color: #2563eb;
}

.chip button {
    margin-left: auto;
}

.picker p {
    margin: 0;
    padding: 18px 16px 16px;
    color: #2563eb;
}

.dialog-foot {
    display: flex;
    gap: 16px;
    padding: 24px 32px;
    border-top: 2px solid #e5e7eb;
    background-color: #f0f0f0;
}

.dialog-foot button {
    height: 64px;
    padding: 0 26px 4px;
    border: none;
    border-radius: 8px;
    font-size: 24px;
    font-weight: 600;
}

.dialog-foot .apply {
    flex: 1;
    background-color: #2563eb;
    color: white;
}

.dialog-foot .cancel {
    background: none;
    color: #1f2937;
}

.snippet {
    display: flex;
    align-items: center;
    gap: 5px;
    height: 60px;
    padding: 0 20px 0 22px;
    border: 2px solid #e5e7eb;
    border-radius: 16px;
    background-color: white;
    box-shadow: 0 4px 12px rgba(0, 0, 0, 0.1);
}

.snippet code {
    padding-bottom: 8px;
    font-family: "Noto Sans Mono", "DejaVu Sans Mono", monospace;
    font-size: 22px;
    color: #1f2937;
}

.snippet span {
    color: #9ca3af;
}

.caret {
    width: 9px;
    height: 9px;
    fill: #868c95;
}

.status {
    display: flex;
    gap: 16px;
    margin-top: auto;
    margin-right: 32px;
}

.status-btn {
    display: flex;
    align-items: center;
    height: 64px;
    padding: 0 20px;
    border: 2px solid #dcdcdc;
    border-radius: 16px;
    background-color: #f0f0f0;
    font-size: 24px;
    line-height: 30px;
    color: #5b6470;
}

.status-btn span {
    margin-left: 12px;
}

.status-btn .unit {
    margin-right: 24px;
}

.status-btn .icon {
    stroke: rgba(75, 85, 99, 0.65);
}

.status-btn.square {
    width: 64px;
    margin-left: 8px;
    padding: 0;
    justify-content: center;
    border-radius: 12px;
}
```
